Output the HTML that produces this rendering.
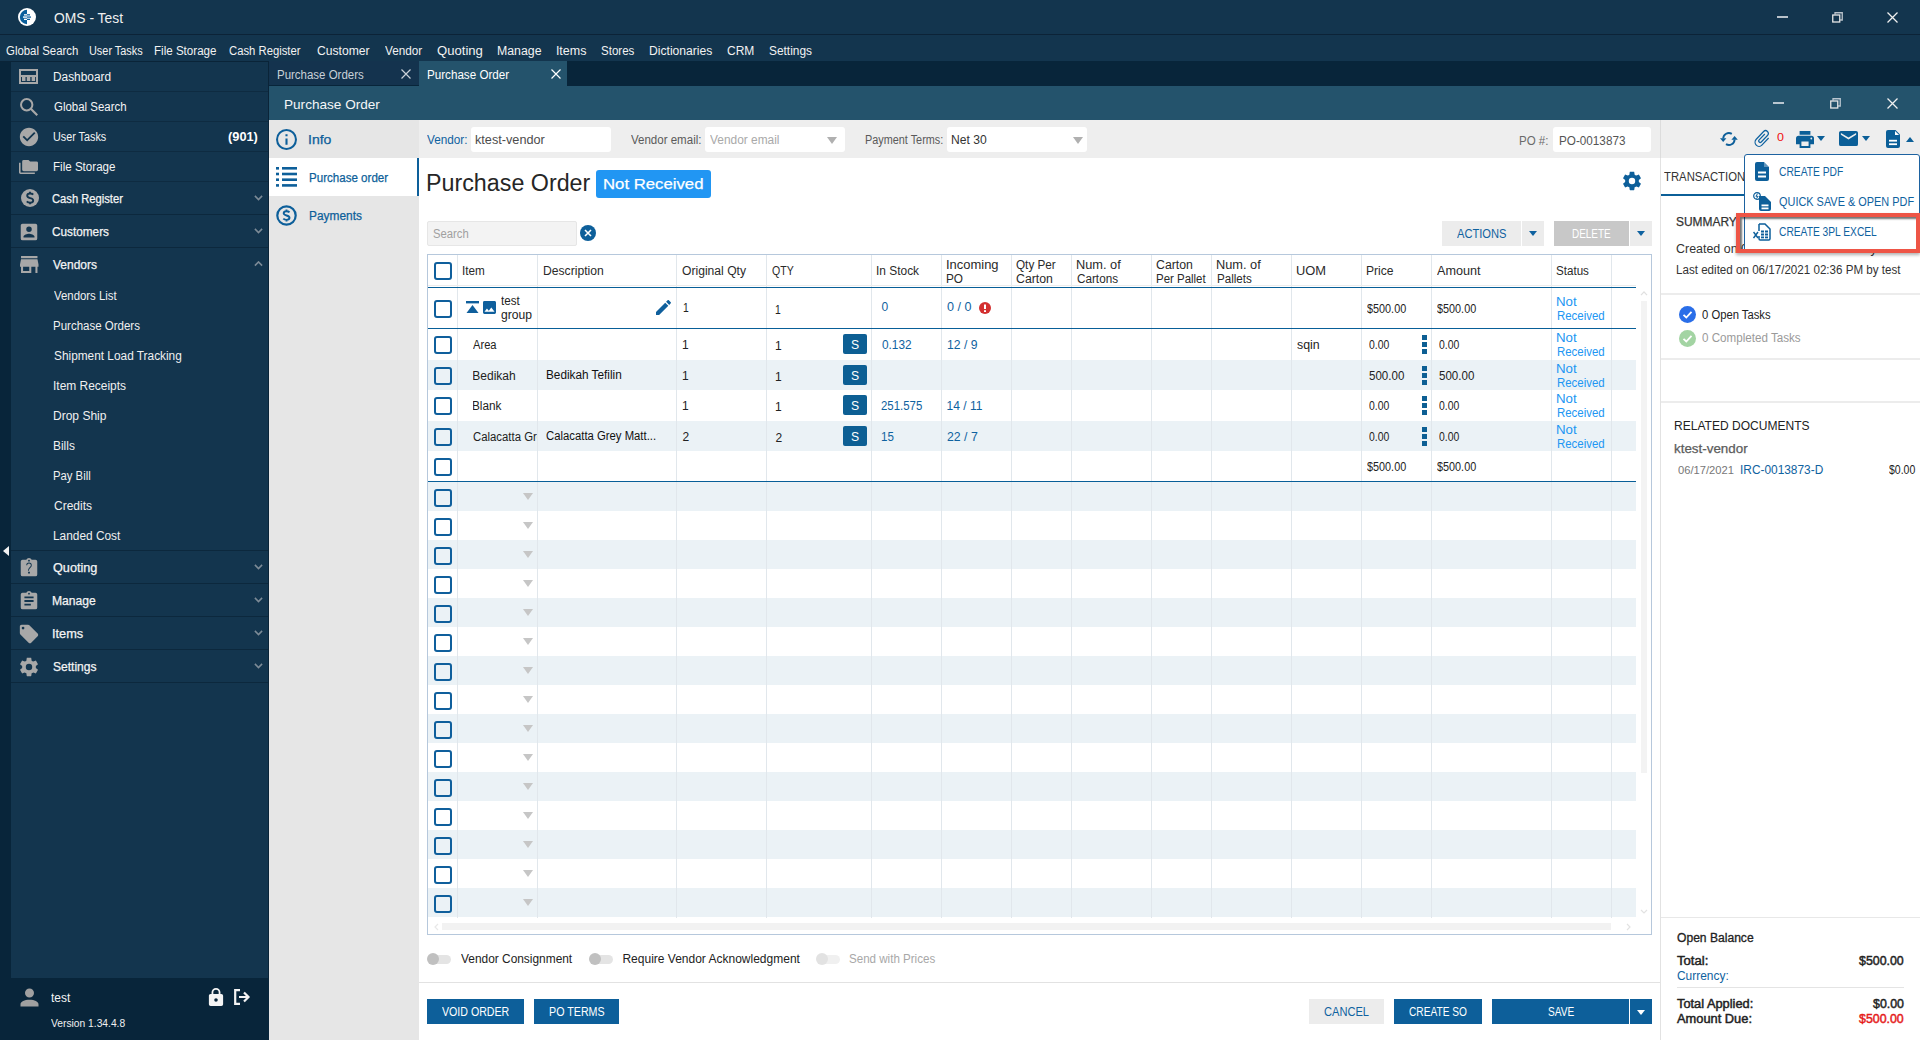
<!DOCTYPE html>
<html><head><meta charset="utf-8"><style>
html,body{margin:0;padding:0;width:1920px;height:1040px;overflow:hidden;background:#fff;}
body{position:relative;font-family:"Liberation Sans",sans-serif;}
div{position:absolute;}
</style></head><body>
<div style="left:0px;top:0px;width:1920px;height:34px;background:#13354e;"></div>
<div style="left:0px;top:34px;width:1920px;height:1px;background:#0c2337;"></div>
<div style="left:0px;top:35px;width:1920px;height:26px;background:#13354e;"></div>
<svg style="position:absolute;left:18px;top:8px;" width="18" height="18" viewBox="0 0 18 18" preserveAspectRatio="none"><circle cx="9" cy="9" r="9" fill="#fff"/><path d="M9 1.8A7.2 7.2 0 0 0 9 16.2Z" fill="#0b5f9b"/><rect x="6" y="6.2" width="3" height="1.3" fill="#fff"/><rect x="9" y="6.2" width="3" height="1.3" fill="#0b5f9b"/><rect x="5" y="8.3" width="4" height="1.6" fill="#d8e6f0"/><rect x="9" y="8.3" width="4" height="1.6" fill="#3d80b3"/><rect x="6" y="10.7" width="3" height="1.3" fill="#fff"/><rect x="9" y="10.7" width="3" height="1.3" fill="#0b5f9b"/></svg>
<div style="left:53.78px;top:10.10px;font-size:14px;line-height:16px;color:#f0f0f0;font-weight:normal;white-space:nowrap;transform:scaleX(0.9896);transform-origin:0 0;">OMS - Test</div>
<div style="left:1777px;top:16px;width:11px;height:2px;background:#b9c2ca;"></div>
<svg style="position:absolute;left:1832px;top:12px;" width="11" height="11" viewBox="0 0 11 11" preserveAspectRatio="none"><rect x="0.75" y="3" width="7" height="7" fill="none" stroke="#e6e6e6" stroke-width="1.3"/><path d="M3 3V0.75H10.25V8H8" fill="none" stroke="#b9c2ca" stroke-width="1.3"/></svg>
<svg style="position:absolute;left:1887px;top:12px;" width="11" height="11" viewBox="0 0 11 11" preserveAspectRatio="none"><path d="M0.5 0.5L10.5 10.5M10.5 0.5L0.5 10.5" stroke="#f0f0f0" stroke-width="1.3"/></svg>
<div style="left:5.93px;top:44.00px;font-size:12.5px;line-height:14px;color:#f2f2f2;font-weight:normal;white-space:nowrap;transform:scaleX(0.9132);transform-origin:0 0;">Global Search</div>
<div style="left:89.43px;top:44.00px;font-size:12.5px;line-height:14px;color:#f2f2f2;font-weight:normal;white-space:nowrap;transform:scaleX(0.8723);transform-origin:0 0;">User Tasks</div>
<div style="left:154.07px;top:44.00px;font-size:12.5px;line-height:14px;color:#f2f2f2;font-weight:normal;white-space:nowrap;transform:scaleX(0.9269);transform-origin:0 0;">File Storage</div>
<div style="left:229.44px;top:44.00px;font-size:12.5px;line-height:14px;color:#f2f2f2;font-weight:normal;white-space:nowrap;transform:scaleX(0.9027);transform-origin:0 0;">Cash Register</div>
<div style="left:316.59px;top:44.00px;font-size:12.5px;line-height:14px;color:#f2f2f2;font-weight:normal;white-space:nowrap;transform:scaleX(0.9716);transform-origin:0 0;">Customer</div>
<div style="left:384.94px;top:44.00px;font-size:12.5px;line-height:14px;color:#f2f2f2;font-weight:normal;white-space:nowrap;transform:scaleX(0.9386);transform-origin:0 0;">Vendor</div>
<div style="left:436.91px;top:44.00px;font-size:12.5px;line-height:14px;color:#f2f2f2;font-weight:normal;white-space:nowrap;transform:scaleX(1.0478);transform-origin:0 0;">Quoting</div>
<div style="left:497.01px;top:44.00px;font-size:12.5px;line-height:14px;color:#f2f2f2;font-weight:normal;white-space:nowrap;transform:scaleX(0.9857);transform-origin:0 0;">Manage</div>
<div style="left:555.88px;top:44.00px;font-size:12.5px;line-height:14px;color:#f2f2f2;font-weight:normal;white-space:nowrap;">Items</div>
<div style="left:601.08px;top:44.00px;font-size:12.5px;line-height:14px;color:#f2f2f2;font-weight:normal;white-space:nowrap;transform:scaleX(0.9224);transform-origin:0 0;">Stores</div>
<div style="left:649.03px;top:44.00px;font-size:12.5px;line-height:14px;color:#f2f2f2;font-weight:normal;white-space:nowrap;transform:scaleX(0.9706);transform-origin:0 0;">Dictionaries</div>
<div style="left:727.40px;top:44.00px;font-size:12.5px;line-height:14px;color:#f2f2f2;font-weight:normal;white-space:nowrap;transform:scaleX(0.9604);transform-origin:0 0;">CRM</div>
<div style="left:769.47px;top:44.00px;font-size:12.5px;line-height:14px;color:#f2f2f2;font-weight:normal;white-space:nowrap;transform:scaleX(0.9505);transform-origin:0 0;">Settings</div>
<div style="left:0px;top:61px;width:11px;height:979px;background:#08253a;"></div>
<div style="left:11px;top:62px;width:258px;height:916px;background:#13354e;"></div>
<div style="left:0px;top:61px;width:269px;height:1px;background:#0a2438;"></div>
<div style="left:0px;top:978px;width:269px;height:62px;background:#08253a;"></div>
<svg style="position:absolute;left:3px;top:546px;" width="6" height="10" viewBox="0 0 6 10" preserveAspectRatio="none"><path d="M6 0V10L0 5Z" fill="#f2f2f2"/></svg>
<div style="left:11px;top:91px;width:257px;height:1px;background:#0e2b41;"></div>
<div style="left:53.35px;top:69.50px;font-size:12.5px;line-height:14px;color:#f4f4f4;font-weight:normal;white-space:nowrap;transform:scaleX(0.9492);transform-origin:0 0;">Dashboard</div>
<svg style="position:absolute;left:19px;top:69px;" width="19" height="15" viewBox="0 0 19 15" preserveAspectRatio="none"><rect x="1" y="1" width="17" height="13" fill="none" stroke="#a8a8a8" stroke-width="2"/><rect x="3" y="8" width="3.5" height="4" fill="#a8a8a8"/><rect x="7.8" y="8" width="3.5" height="4" fill="#a8a8a8"/><rect x="12.6" y="8" width="3.5" height="4" fill="#a8a8a8"/><rect x="1" y="6" width="17" height="2" fill="#a8a8a8"/></svg>
<div style="left:11px;top:121px;width:257px;height:1px;background:#0e2b41;"></div>
<div style="left:53.73px;top:99.50px;font-size:12.5px;line-height:14px;color:#f4f4f4;font-weight:normal;white-space:nowrap;transform:scaleX(0.9158);transform-origin:0 0;">Global Search</div>
<svg style="position:absolute;left:18px;top:96.0px;" width="22" height="22" viewBox="0 0 24 24" preserveAspectRatio="none"><circle cx="9.5" cy="9.5" r="6.2" fill="none" stroke="#a8a8a8" stroke-width="2.2"/><path d="M14 14L21 21" stroke="#a8a8a8" stroke-width="2.4"/></svg>
<div style="left:11px;top:151px;width:257px;height:1px;background:#0e2b41;"></div>
<div style="left:53.49px;top:129.50px;font-size:12.5px;line-height:14px;color:#f4f4f4;font-weight:normal;white-space:nowrap;transform:scaleX(0.8640);transform-origin:0 0;">User Tasks</div>
<svg style="position:absolute;left:18px;top:126.0px;" width="22" height="22" viewBox="0 0 24 24" preserveAspectRatio="none"><path d="M12 2C6.5 2 2 6.5 2 12S6.5 22 12 22 22 17.5 22 12 17.5 2 12 2M10 17L5 12L6.41 10.59L10 14.17L17.59 6.58L19 8L10 17Z" fill="#a8a8a8"/></svg>
<div style="left:11px;top:181px;width:257px;height:1px;background:#0e2b41;"></div>
<div style="left:53.37px;top:159.50px;font-size:12.5px;line-height:14px;color:#f4f4f4;font-weight:normal;white-space:nowrap;transform:scaleX(0.9269);transform-origin:0 0;">File Storage</div>
<svg style="position:absolute;left:19px;top:159.6px;" width="19" height="14" viewBox="0 2 24 20" preserveAspectRatio="none"><path d="M22,4H14L12,2H6A2,2 0 0,0 4,4V16A2,2 0 0,0 6,18H22A2,2 0 0,0 24,16V6A2,2 0 0,0 22,4M2,6H0V11H0V20A2,2 0 0,0 2,22H20V20H2V6Z" fill="#a8a8a8"/></svg>
<div style="left:11px;top:214px;width:257px;height:1px;background:#0c283d;"></div>
<div style="left:52.44px;top:191.50px;font-size:12.5px;line-height:14px;color:#f4f4f4;font-weight:normal;white-space:nowrap;transform:scaleX(0.8957);transform-origin:0 0;-webkit-text-stroke:0.25px #f4f4f4;">Cash Register</div>
<svg style="position:absolute;left:20.5px;top:189px;" width="18" height="18" viewBox="0 0 18 18" preserveAspectRatio="none"><circle cx="9" cy="9" r="9" fill="#a8a8a8"/><path d="M12.2 5.6C11.6 4.9 10.5 4.5 9.2 4.5C7.5 4.5 6.2 5.4 6.2 6.8C6.2 9.9 12.2 8.4 12.2 11.4C12.2 12.8 10.9 13.6 9.1 13.6C7.7 13.6 6.5 13.1 5.8 12.3M9 2.8V4.5M9 13.6V15.3" fill="none" stroke="#13354e" stroke-width="1.9"/></svg>
<svg style="position:absolute;left:253.5px;top:195.0px;" width="9" height="5.5" viewBox="0 0 10 6" preserveAspectRatio="none"><path d="M1 1L5 5L9 1" fill="none" stroke="#7d8b97" stroke-width="1.7"/></svg>
<div style="left:11px;top:247px;width:257px;height:1px;background:#0c283d;"></div>
<div style="left:52.41px;top:224.50px;font-size:12.5px;line-height:14px;color:#f4f4f4;font-weight:normal;white-space:nowrap;transform:scaleX(0.9432);transform-origin:0 0;-webkit-text-stroke:0.25px #f4f4f4;">Customers</div>
<svg style="position:absolute;left:18px;top:220.5px;" width="22" height="22" viewBox="0 0 24 24" preserveAspectRatio="none"><path d="M6,17C6,15 10,13.9 12,13.9C14,13.9 18,15 18,17V18H6M15,9A3,3 0 0,1 12,12A3,3 0 0,1 9,9A3,3 0 0,1 12,6A3,3 0 0,1 15,9M3,5V19A2,2 0 0,0 5,21H19A2,2 0 0,0 21,19V5A2,2 0 0,0 19,3H5C3.89,3 3,3.9 3,5Z" fill="#a8a8a8"/></svg>
<svg style="position:absolute;left:253.5px;top:228.0px;" width="9" height="5.5" viewBox="0 0 10 6" preserveAspectRatio="none"><path d="M1 1L5 5L9 1" fill="none" stroke="#7d8b97" stroke-width="1.7"/></svg>
<div style="left:52.94px;top:257.50px;font-size:12.5px;line-height:14px;color:#f4f4f4;font-weight:normal;white-space:nowrap;transform:scaleX(0.9587);transform-origin:0 0;-webkit-text-stroke:0.25px #f4f4f4;">Vendors</div>
<svg style="position:absolute;left:20.3px;top:255.5px;" width="18.5" height="17" viewBox="3 4 18 16" preserveAspectRatio="none"><path d="M12,18H6V14H12M21,14V12L20,7H4L3,12V14H4V20H14V14H18V20H20V14M20,4H4V6H20V4Z" fill="#a8a8a8"/></svg>
<svg style="position:absolute;left:253.5px;top:261.0px;" width="9" height="5.5" viewBox="0 0 10 6" preserveAspectRatio="none"><path d="M1 5L5 1L9 5" fill="none" stroke="#7d8b97" stroke-width="1.7"/></svg>
<div style="left:11px;top:583px;width:257px;height:1px;background:#0c283d;"></div>
<div style="left:52.83px;top:560.50px;font-size:12.5px;line-height:14px;color:#f4f4f4;font-weight:normal;white-space:nowrap;transform:scaleX(1.0147);transform-origin:0 0;-webkit-text-stroke:0.25px #f4f4f4;">Quoting</div>
<svg style="position:absolute;left:18px;top:556.5px;" width="22" height="22" viewBox="0 0 24 24" preserveAspectRatio="none"><path d="M19,3H14.82C14.4,1.84 13.3,1 12,1C10.7,1 9.6,1.84 9.18,3H5A2,2 0 0,0 3,5V19A2,2 0 0,0 5,21H19A2,2 0 0,0 21,19V5A2,2 0 0,0 19,3M12,3A1,1 0 0,1 13,4A1,1 0 0,1 12,5A1,1 0 0,1 11,4A1,1 0 0,1 12,3M13,18H11V16H13V18M14.07,11.25L13.17,12.17C12.45,12.89 12,13.5 12,15H11V14.5C11,13.39 11.45,12.39 12.17,11.67L13.41,10.41C13.78,10.05 14,9.55 14,9C14,7.89 13.1,7 12,7A2,2 0 0,0 10,9H9A3,3 0 0,1 12,6A3,3 0 0,1 15,9C15,9.88 14.64,10.67 14.07,11.25Z" fill="#a8a8a8"/></svg>
<svg style="position:absolute;left:253.5px;top:564.0px;" width="9" height="5.5" viewBox="0 0 10 6" preserveAspectRatio="none"><path d="M1 1L5 5L9 1" fill="none" stroke="#7d8b97" stroke-width="1.7"/></svg>
<div style="left:11px;top:616px;width:257px;height:1px;background:#0c283d;"></div>
<div style="left:52.43px;top:593.50px;font-size:12.5px;line-height:14px;color:#f4f4f4;font-weight:normal;white-space:nowrap;transform:scaleX(0.9696);transform-origin:0 0;-webkit-text-stroke:0.25px #f4f4f4;">Manage</div>
<svg style="position:absolute;left:18px;top:589.5px;" width="22" height="22" viewBox="0 0 24 24" preserveAspectRatio="none"><path d="M17,9H7V7H17M17,13H7V11H17M14,17H7V15H14M12,3A1,1 0 0,1 13,4A1,1 0 0,1 12,5A1,1 0 0,1 11,4A1,1 0 0,1 12,3M19,3H14.82C14.4,1.84 13.3,1 12,1C10.7,1 9.6,1.84 9.18,3H5A2,2 0 0,0 3,5V19A2,2 0 0,0 5,21H19A2,2 0 0,0 21,19V5A2,2 0 0,0 19,3Z" fill="#a8a8a8"/></svg>
<svg style="position:absolute;left:253.5px;top:597.0px;" width="9" height="5.5" viewBox="0 0 10 6" preserveAspectRatio="none"><path d="M1 1L5 5L9 1" fill="none" stroke="#7d8b97" stroke-width="1.7"/></svg>
<div style="left:11px;top:649px;width:257px;height:1px;background:#0c283d;"></div>
<div style="left:52.25px;top:626.50px;font-size:12.5px;line-height:14px;color:#f4f4f4;font-weight:normal;white-space:nowrap;transform:scaleX(1.0207);transform-origin:0 0;-webkit-text-stroke:0.25px #f4f4f4;">Items</div>
<svg style="position:absolute;left:18px;top:622.5px;" width="22" height="22" viewBox="0 0 24 24" preserveAspectRatio="none"><path d="M5.5,7A1.5,1.5 0 0,1 4,5.5A1.5,1.5 0 0,1 5.5,4A1.5,1.5 0 0,1 7,5.5A1.5,1.5 0 0,1 5.5,7M21.41,11.58L12.41,2.58C12.05,2.22 11.55,2 11,2H4C2.89,2 2,2.89 2,4V11C2,11.55 2.22,12.05 2.59,12.42L11.58,21.42C11.95,21.78 12.45,22 13,22C13.55,22 14.05,21.78 14.41,21.41L21.41,14.41C21.78,14.05 22,13.55 22,13C22,12.44 21.77,11.94 21.41,11.58Z" fill="#a8a8a8"/></svg>
<svg style="position:absolute;left:253.5px;top:630.0px;" width="9" height="5.5" viewBox="0 0 10 6" preserveAspectRatio="none"><path d="M1 1L5 5L9 1" fill="none" stroke="#7d8b97" stroke-width="1.7"/></svg>
<div style="left:11px;top:682px;width:257px;height:1px;background:#0c283d;"></div>
<div style="left:52.86px;top:659.50px;font-size:12.5px;line-height:14px;color:#f4f4f4;font-weight:normal;white-space:nowrap;transform:scaleX(0.9641);transform-origin:0 0;-webkit-text-stroke:0.25px #f4f4f4;">Settings</div>
<svg style="position:absolute;left:18px;top:655.5px;" width="22" height="22" viewBox="0 0 24 24" preserveAspectRatio="none"><path d="M12,15.5A3.5,3.5 0 0,1 8.5,12A3.5,3.5 0 0,1 12,8.5A3.5,3.5 0 0,1 15.5,12A3.5,3.5 0 0,1 12,15.5M19.43,12.97C19.47,12.65 19.5,12.33 19.5,12C19.5,11.67 19.47,11.34 19.43,11L21.54,9.37C21.73,9.22 21.78,8.95 21.66,8.73L19.66,5.27C19.54,5.05 19.27,4.96 19.05,5.05L16.56,6.05C16.04,5.66 15.5,5.32 14.87,5.07L14.5,2.42C14.46,2.18 14.25,2 14,2H10C9.75,2 9.54,2.180 9.5,2.42L9.13,5.07C8.5,5.32 7.96,5.66 7.44,6.05L4.95,5.05C4.73,4.96 4.46,5.05 4.34,5.27L2.34,8.73C2.21,8.95 2.27,9.22 2.46,9.37L4.57,11C4.53,11.34 4.5,11.67 4.5,12C4.5,12.33 4.53,12.65 4.57,12.97L2.46,14.63C2.27,14.78 2.21,15.05 2.34,15.27L4.34,18.73C4.46,18.95 4.73,19.03 4.95,18.95L7.44,17.94C7.96,18.34 8.5,18.68 9.13,18.93L9.5,21.58C9.54,21.82 9.75,22 10,22H14C14.25,22 14.46,21.82 14.5,21.58L14.87,18.93C15.5,18.67 16.04,18.34 16.56,17.94L19.05,18.95C19.27,19.03 19.54,18.95 19.660,18.73L21.66,15.27C21.78,15.05 21.73,14.78 21.54,14.63L19.43,12.97Z" fill="#a8a8a8"/></svg>
<svg style="position:absolute;left:253.5px;top:663.0px;" width="9" height="5.5" viewBox="0 0 10 6" preserveAspectRatio="none"><path d="M1 1L5 5L9 1" fill="none" stroke="#7d8b97" stroke-width="1.7"/></svg>
<div style="left:11px;top:550px;width:257px;height:1px;background:#0c283d;"></div>
<div style="left:228.11px;top:130.00px;font-size:12.5px;line-height:14px;color:#ffffff;font-weight:bold;white-space:nowrap;transform:scaleX(1.0237);transform-origin:0 0;">(901)</div>
<div style="left:268px;top:61px;width:1px;height:917px;background:#0a2438;"></div>
<div style="left:54.14px;top:289.00px;font-size:12.5px;line-height:14px;color:#f0f0f0;font-weight:normal;white-space:nowrap;transform:scaleX(0.9107);transform-origin:0 0;">Vendors List</div>
<div style="left:53.28px;top:319.00px;font-size:12.5px;line-height:14px;color:#f0f0f0;font-weight:normal;white-space:nowrap;transform:scaleX(0.9198);transform-origin:0 0;">Purchase Orders</div>
<div style="left:53.67px;top:349.00px;font-size:12.5px;line-height:14px;color:#f0f0f0;font-weight:normal;white-space:nowrap;transform:scaleX(0.9480);transform-origin:0 0;">Shipment Load Tracking</div>
<div style="left:53.13px;top:379.00px;font-size:12.5px;line-height:14px;color:#f0f0f0;font-weight:normal;white-space:nowrap;transform:scaleX(0.9549);transform-origin:0 0;">Item Receipts</div>
<div style="left:53.24px;top:409.00px;font-size:12.5px;line-height:14px;color:#f0f0f0;font-weight:normal;white-space:nowrap;transform:scaleX(0.9618);transform-origin:0 0;">Drop Ship</div>
<div style="left:53.25px;top:439.00px;font-size:12.5px;line-height:14px;color:#f0f0f0;font-weight:normal;white-space:nowrap;transform:scaleX(0.9535);transform-origin:0 0;">Bills</div>
<div style="left:53.30px;top:469.00px;font-size:12.5px;line-height:14px;color:#f0f0f0;font-weight:normal;white-space:nowrap;transform:scaleX(0.9042);transform-origin:0 0;">Pay Bill</div>
<div style="left:53.60px;top:499.00px;font-size:12.5px;line-height:14px;color:#f0f0f0;font-weight:normal;white-space:nowrap;transform:scaleX(0.9595);transform-origin:0 0;">Credits</div>
<div style="left:53.25px;top:529.00px;font-size:12.5px;line-height:14px;color:#f0f0f0;font-weight:normal;white-space:nowrap;transform:scaleX(0.9497);transform-origin:0 0;">Landed Cost</div>
<svg style="position:absolute;left:16.3px;top:983.5px;" width="27" height="27" viewBox="0 0 24 24" preserveAspectRatio="none"><path d="M12,4A4,4 0 0,1 16,8A4,4 0 0,1 12,12A4,4 0 0,1 8,8A4,4 0 0,1 12,4M12,14C16.42,14 20,15.79 20,18V20H4V18C4,15.79 7.58,14 12,14Z" fill="#a0a0a0"/></svg>
<div style="left:50.82px;top:991.00px;font-size:12.5px;line-height:14px;color:#f4f4f4;font-weight:normal;white-space:nowrap;transform:scaleX(0.9560);transform-origin:0 0;">test</div>
<div style="left:50.95px;top:1017.20px;font-size:11px;line-height:12px;color:#f0f0f0;font-weight:normal;white-space:nowrap;transform:scaleX(0.9331);transform-origin:0 0;">Version 1.34.4.8</div>
<svg style="position:absolute;left:208px;top:988px;" width="16" height="18" viewBox="3 1 18 21" preserveAspectRatio="none"><path d="M12,17A2,2 0 0,0 14,15C14,13.89 13.1,13 12,13A2,2 0 0,0 10,15A2,2 0 0,0 12,17M18,8A2,2 0 0,1 20,10V20A2,2 0 0,1 18,22H6A2,2 0 0,1 4,20V10C4,8.89 4.9,8 6,8H7V6A5,5 0 0,1 12,1A5,5 0 0,1 17,6V8H18M12,3A3,3 0 0,0 9,6V8H15V6A3,3 0 0,0 12,3Z" fill="#f4f4f4"/></svg>
<svg style="position:absolute;left:234px;top:989px;" width="17" height="16" viewBox="0 0 17 16" preserveAspectRatio="none"><path d="M6 1.2H1.2V14.8H6" fill="none" stroke="#f4f4f4" stroke-width="2.2"/><path d="M5 8H14M10 3.5L14.5 8L10 12.5" fill="none" stroke="#f4f4f4" stroke-width="2.2"/></svg>
<div style="left:269px;top:61px;width:1651px;height:25px;background:#08253a;"></div>
<div style="left:269px;top:61px;width:150px;height:24px;background:#14334e;"></div>
<div style="left:276.68px;top:67.60px;font-size:12px;line-height:14px;color:#c9d1d8;font-weight:normal;white-space:nowrap;transform:scaleX(0.9559);transform-origin:0 0;">Purchase Orders</div>
<svg style="position:absolute;left:401px;top:69px;" width="10" height="10" viewBox="0 0 10 10" preserveAspectRatio="none"><path d="M0.5 0.5L9.5 9.5M9.5 0.5L0.5 9.5" stroke="#c9d1d8" stroke-width="1.2"/></svg>
<div style="left:419px;top:61px;width:148px;height:25px;background:#24536c;"></div>
<div style="left:426.57px;top:67.60px;font-size:12px;line-height:14px;color:#ffffff;font-weight:normal;white-space:nowrap;transform:scaleX(0.9698);transform-origin:0 0;">Purchase Order</div>
<svg style="position:absolute;left:551px;top:69px;" width="10" height="10" viewBox="0 0 10 10" preserveAspectRatio="none"><path d="M0.5 0.5L9.5 9.5M9.5 0.5L0.5 9.5" stroke="#ffffff" stroke-width="1.2"/></svg>
<div style="left:269px;top:86px;width:1651px;height:34px;background:#24536c;"></div>
<div style="left:284.41px;top:96.90px;font-size:13px;line-height:15px;color:#f4f6f8;font-weight:normal;white-space:nowrap;transform:scaleX(1.0444);transform-origin:0 0;">Purchase Order</div>
<div style="left:1773px;top:102px;width:11px;height:2px;background:#b9c6d0;"></div>
<svg style="position:absolute;left:1830px;top:98px;" width="11" height="11" viewBox="0 0 11 11" preserveAspectRatio="none"><rect x="0.75" y="3" width="7" height="7" fill="none" stroke="#e6e6e6" stroke-width="1.3"/><path d="M3 3V0.75H10.25V8H8" fill="none" stroke="#b9c6d0" stroke-width="1.3"/></svg>
<svg style="position:absolute;left:1887px;top:98px;" width="11" height="11" viewBox="0 0 11 11" preserveAspectRatio="none"><path d="M0.5 0.5L10.5 10.5M10.5 0.5L0.5 10.5" stroke="#f0f0f0" stroke-width="1.3"/></svg>
<div style="left:269px;top:120px;width:150px;height:920px;background:#e6e6e6;"></div>
<div style="left:269px;top:158px;width:148px;height:38px;background:#ffffff;"></div>
<div style="left:417px;top:158px;width:2px;height:38px;background:#0d5f9a;"></div>
<svg style="position:absolute;left:276px;top:129px;" width="21" height="21" viewBox="2 2 20 20" preserveAspectRatio="none"><path d="M11,9H13V7H11M12,20C7.59,20 4,16.41 4,12C4,7.59 7.59,4 12,4C16.41,4 20,7.59 20,12C20,16.41 16.41,20 12,20M12,2A10,10 0 0,0 2,12A10,10 0 0,0 12,22A10,10 0 0,0 22,12A10,10 0 0,0 12,2M11,17H13V11H11V17Z" fill="#0d5f9a"/></svg>
<div style="left:308.44px;top:132.80px;font-size:12.5px;line-height:14px;color:#0d5f9a;font-weight:normal;white-space:nowrap;transform:scaleX(1.1205);transform-origin:0 0;-webkit-text-stroke:0.25px #0d5f9a;">Info</div>
<svg style="position:absolute;left:276px;top:167px;" width="21" height="20" viewBox="0 0 21 20" preserveAspectRatio="none"><rect x="0" y="0" width="3" height="2.6" fill="#0d5f9a"/><rect x="6" y="0" width="15" height="2.6" fill="#0d5f9a"/><rect x="0" y="5.7" width="3" height="2.6" fill="#0d5f9a"/><rect x="6" y="5.7" width="15" height="2.6" fill="#0d5f9a"/><rect x="0" y="11.4" width="3" height="2.6" fill="#0d5f9a"/><rect x="6" y="11.4" width="15" height="2.6" fill="#0d5f9a"/><rect x="0" y="17.1" width="3" height="2.6" fill="#0d5f9a"/><rect x="6" y="17.1" width="15" height="2.6" fill="#0d5f9a"/></svg>
<div style="left:308.77px;top:170.50px;font-size:12.5px;line-height:14px;color:#0d5f9a;font-weight:normal;white-space:nowrap;transform:scaleX(0.9258);transform-origin:0 0;-webkit-text-stroke:0.25px #0d5f9a;">Purchase order</div>
<svg style="position:absolute;left:276px;top:205px;" width="21" height="21" viewBox="0 0 21 21" preserveAspectRatio="none"><circle cx="10.5" cy="10.5" r="9.2" fill="none" stroke="#0d5f9a" stroke-width="2.2"/><path d="M13.5 7.3C12.8 6.5 11.8 6.2 10.5 6.2C8.9 6.2 7.7 7 7.7 8.3C7.7 11.2 13.5 9.8 13.5 12.8C13.5 14.1 12.3 14.9 10.5 14.9C9.2 14.9 8.1 14.5 7.3 13.7M10.5 4.5V6.2M10.5 14.9V16.6" fill="none" stroke="#0d5f9a" stroke-width="1.9"/></svg>
<div style="left:308.75px;top:208.50px;font-size:12.5px;line-height:14px;color:#0d5f9a;font-weight:normal;white-space:nowrap;transform:scaleX(0.9515);transform-origin:0 0;-webkit-text-stroke:0.25px #0d5f9a;">Payments</div>
<div style="left:419px;top:120px;width:1501px;height:38px;background:#eeeeee;"></div>
<div style="left:1660px;top:120px;width:1px;height:38px;background:#dcdcdc;"></div>
<div style="left:426.94px;top:132.80px;font-size:12px;line-height:14px;color:#0f62a0;font-weight:normal;white-space:nowrap;transform:scaleX(0.9801);transform-origin:0 0;">Vendor:</div>
<div style="left:471px;top:127px;width:140px;height:25px;background:#ffffff;border-radius:3px;"></div>
<div style="left:474.68px;top:132.80px;font-size:12px;line-height:14px;color:#4c4c4c;font-weight:normal;white-space:nowrap;transform:scaleX(1.0563);transform-origin:0 0;">ktest-vendor</div>
<div style="left:631.19px;top:132.80px;font-size:12px;line-height:14px;color:#5a5a5a;font-weight:normal;white-space:nowrap;transform:scaleX(0.9601);transform-origin:0 0;">Vendor email:</div>
<div style="left:705px;top:127px;width:140px;height:25px;background:#ffffff;border-radius:3px;"></div>
<div style="left:710.34px;top:132.80px;font-size:12px;line-height:14px;color:#a9a9a9;font-weight:normal;white-space:nowrap;transform:scaleX(0.9916);transform-origin:0 0;">Vendor email</div>
<svg style="position:absolute;left:827px;top:137px;" width="10" height="7" viewBox="0 0 10 7" preserveAspectRatio="none"><path d="M0 0H10L5 7Z" fill="#b0b0b0"/></svg>
<div style="left:864.73px;top:132.80px;font-size:12px;line-height:14px;color:#5a5a5a;font-weight:normal;white-space:nowrap;transform:scaleX(0.9050);transform-origin:0 0;">Payment Terms:</div>
<div style="left:947px;top:127px;width:140px;height:25px;background:#ffffff;border-radius:3px;"></div>
<div style="left:950.73px;top:132.80px;font-size:12px;line-height:14px;color:#333333;font-weight:normal;white-space:nowrap;transform:scaleX(1.0100);transform-origin:0 0;">Net 30</div>
<svg style="position:absolute;left:1073px;top:137px;" width="10" height="7" viewBox="0 0 10 7" preserveAspectRatio="none"><path d="M0 0H10L5 7Z" fill="#b0b0b0"/></svg>
<div style="left:1519.08px;top:133.50px;font-size:12px;line-height:14px;color:#6a6a6a;font-weight:normal;white-space:nowrap;transform:scaleX(0.9609);transform-origin:0 0;">PO #:</div>
<div style="left:1553px;top:127px;width:98px;height:25px;background:#ffffff;border-radius:3px;"></div>
<div style="left:1559.06px;top:133.50px;font-size:12px;line-height:14px;color:#555555;font-weight:normal;white-space:nowrap;transform:scaleX(0.9760);transform-origin:0 0;">PO-0013873</div>
<svg style="position:absolute;left:1720px;top:132px;" width="18" height="14" viewBox="0 0 18 14" preserveAspectRatio="none"><path d="M11.8 1.9A5.6 5.6 0 0 0 3.2 6.6" fill="none" stroke="#0d5f9a" stroke-width="1.9"/><path d="M0 6.3H6.4L3.2 10Z" fill="#0d5f9a"/><path d="M6 12.1A5.6 5.6 0 0 0 14.6 7.4" fill="none" stroke="#0d5f9a" stroke-width="1.9"/><path d="M11.4 7.7H17.8L14.6 4Z" fill="#0d5f9a"/></svg>
<svg style="position:absolute;left:1752px;top:128px;" width="20" height="21" viewBox="0 0 24 24" preserveAspectRatio="none"><g transform="rotate(45 12 12)"><path d="M16.5,6V17.5A4,4 0 0,1 12.5,21.5A4,4 0 0,1 8.5,17.5V5A2.5,2.5 0 0,1 11,2.5A2.5,2.5 0 0,1 13.5,5V15.5A1,1 0 0,1 12.5,16.5A1,1 0 0,1 11.5,15.5V6H10V15.5A2.5,2.5 0 0,0 12.5,18A2.5,2.5 0 0,0 15,15.5V5A4,4 0 0,0 11,1A4,4 0 0,0 7,5V17.5A5.5,5.5 0 0,0 12.5,23A5.5,5.5 0 0,0 18,17.5V6H16.5Z" fill="#0f62a0"/></g></svg>
<div style="left:1776.50px;top:131.00px;font-size:11px;line-height:12px;color:#f01010;font-weight:normal;white-space:nowrap;transform:scaleX(1.1364);transform-origin:0 0;">0</div>
<svg style="position:absolute;left:1796px;top:130.5px;" width="18" height="17" viewBox="2 3 20 18" preserveAspectRatio="none"><path d="M18,3H6V7H18M19,12A1,1 0 0,1 18,11A1,1 0 0,1 19,10A1,1 0 0,1 20,11A1,1 0 0,1 19,12M16,19H8V14H16M19,8H5A3,3 0 0,0 2,11V17H6V21H18V17H22V11A3,3 0 0,0 19,8Z" fill="#0b5f98"/></svg>
<svg style="position:absolute;left:1817px;top:136px;" width="8" height="5" viewBox="0 0 8 5" preserveAspectRatio="none"><path d="M0 0H8L4 5Z" fill="#0b5f98"/></svg>
<svg style="position:absolute;left:1839px;top:131px;" width="19" height="15" viewBox="2 4 20 16" preserveAspectRatio="none"><path d="M20,8L12,13L4,8V6L12,11L20,6M20,4H4C2.89,4 2,4.89 2,6V18A2,2 0 0,0 4,20H20A2,2 0 0,0 22,18V6C22,4.89 21.1,4 20,4Z" fill="#0b5f98"/></svg>
<svg style="position:absolute;left:1862px;top:136px;" width="8" height="5" viewBox="0 0 8 5" preserveAspectRatio="none"><path d="M0 0H8L4 5Z" fill="#0b5f98"/></svg>
<svg style="position:absolute;left:1886px;top:130px;" width="14" height="18" viewBox="0 0 14 18" preserveAspectRatio="none"><path d="M2 0H9.5L14 4.5V16A2 2 0 0 1 12 18H2A2 2 0 0 1 0 16V2A2 2 0 0 1 2 0Z" fill="#0b5f98"/><path d="M9 0.9V5H13.1Z" fill="#fff"/><rect x="3" y="9.8" width="8" height="1.8" fill="#fff"/><rect x="3" y="13.3" width="8" height="1.8" fill="#fff"/></svg>
<svg style="position:absolute;left:1906px;top:137px;" width="8" height="5" viewBox="0 0 8 5" preserveAspectRatio="none"><path d="M0 5H8L4 0Z" fill="#0b5f98"/></svg>
<div style="left:419px;top:158px;width:1241px;height:824px;background:#ffffff;"></div>
<div style="left:419px;top:982px;width:1241px;height:1px;background:#e2e2e2;"></div>
<div style="left:419px;top:983px;width:1241px;height:57px;background:#ffffff;"></div>
<div style="left:425.94px;top:170.40px;font-size:23px;line-height:26px;color:#262626;font-weight:normal;white-space:nowrap;transform:scaleX(1.0120);transform-origin:0 0;">Purchase Order</div>
<div style="left:596px;top:170px;width:115px;height:28px;background:#2196f3;border-radius:3px;"></div>
<div style="left:603.06px;top:174.60px;font-size:15px;line-height:17px;color:#ffffff;font-weight:normal;white-space:nowrap;transform:scaleX(1.1159);transform-origin:0 0;-webkit-text-stroke:0.25px #ffffff;">Not Received</div>
<svg style="position:absolute;left:1621px;top:170px;" width="22" height="22" viewBox="0 0 24 24" preserveAspectRatio="none"><path d="M12,15.5A3.5,3.5 0 0,1 8.5,12A3.5,3.5 0 0,1 12,8.5A3.5,3.5 0 0,1 15.5,12A3.5,3.5 0 0,1 12,15.5M19.43,12.97C19.47,12.65 19.5,12.33 19.5,12C19.5,11.67 19.47,11.34 19.43,11L21.54,9.37C21.73,9.22 21.78,8.95 21.66,8.73L19.66,5.27C19.54,5.05 19.27,4.96 19.05,5.05L16.56,6.05C16.04,5.66 15.5,5.32 14.87,5.07L14.5,2.42C14.46,2.18 14.25,2 14,2H10C9.75,2 9.54,2.180 9.5,2.42L9.13,5.07C8.5,5.32 7.96,5.66 7.44,6.05L4.95,5.05C4.73,4.96 4.46,5.05 4.34,5.27L2.34,8.73C2.21,8.95 2.27,9.22 2.46,9.37L4.57,11C4.53,11.34 4.5,11.67 4.5,12C4.5,12.33 4.53,12.65 4.57,12.97L2.46,14.63C2.27,14.78 2.21,15.05 2.34,15.27L4.34,18.73C4.46,18.95 4.73,19.03 4.95,18.95L7.44,17.94C7.96,18.34 8.5,18.68 9.13,18.93L9.5,21.58C9.54,21.82 9.75,22 10,22H14C14.25,22 14.46,21.82 14.5,21.58L14.87,18.93C15.5,18.67 16.04,18.34 16.56,17.94L19.05,18.95C19.27,19.03 19.54,18.95 19.660,18.73L21.66,15.27C21.78,15.05 21.73,14.78 21.54,14.63L19.43,12.97Z" fill="#0d5f9a"/></svg>
<div style="left:427px;top:221px;width:150px;height:25px;background:#f3f3f3;border:1px solid #e6e6e6;box-sizing:border-box;border-radius:2px;"></div>
<div style="left:432.79px;top:227.00px;font-size:12px;line-height:14px;color:#a0a0a0;font-weight:normal;white-space:nowrap;transform:scaleX(0.9384);transform-origin:0 0;">Search</div>
<svg style="position:absolute;left:580px;top:225px;" width="16" height="16" viewBox="0 0 16 16" preserveAspectRatio="none"><circle cx="8" cy="8" r="8" fill="#0d5f9a"/><path d="M5 5L11 11M11 5L5 11" stroke="#fff" stroke-width="1.6"/></svg>
<div style="left:1442px;top:221px;width:79px;height:25px;background:#ececec;"></div>
<div style="left:1457.00px;top:227.00px;font-size:12px;line-height:14px;color:#0f62a0;font-weight:normal;white-space:nowrap;transform:scaleX(0.9280);transform-origin:0 0;">ACTIONS</div>
<div style="left:1522px;top:221px;width:22px;height:25px;background:#ececec;"></div>
<svg style="position:absolute;left:1529px;top:231px;" width="8" height="5" viewBox="0 0 8 5" preserveAspectRatio="none"><path d="M0 0H8L4 5Z" fill="#0f62a0"/></svg>
<div style="left:1554px;top:221px;width:75px;height:25px;background:#c8c8c8;"></div>
<div style="left:1572.20px;top:227.00px;font-size:12px;line-height:14px;color:#ffffff;font-weight:normal;white-space:nowrap;transform:scaleX(0.8289);transform-origin:0 0;">DELETE</div>
<div style="left:1630px;top:221px;width:22px;height:25px;background:#ececec;"></div>
<svg style="position:absolute;left:1637px;top:231px;" width="8" height="5" viewBox="0 0 8 5" preserveAspectRatio="none"><path d="M0 0H8L4 5Z" fill="#0f62a0"/></svg>
<div style="left:427px;top:254px;width:1225px;height:681px;background:#ffffff;border:1px solid #b6c8dc;box-sizing:border-box;"></div>
<div style="left:428px;top:360px;width:1208px;height:30px;background:#ebf2f6;"></div>
<div style="left:428px;top:421px;width:1208px;height:30px;background:#ebf2f6;"></div>
<div style="left:428px;top:482px;width:1208px;height:29px;background:#ebf2f6;"></div>
<div style="left:428px;top:540px;width:1208px;height:29px;background:#ebf2f6;"></div>
<div style="left:428px;top:598px;width:1208px;height:29px;background:#ebf2f6;"></div>
<div style="left:428px;top:656px;width:1208px;height:29px;background:#ebf2f6;"></div>
<div style="left:428px;top:714px;width:1208px;height:29px;background:#ebf2f6;"></div>
<div style="left:428px;top:772px;width:1208px;height:29px;background:#ebf2f6;"></div>
<div style="left:428px;top:830px;width:1208px;height:29px;background:#ebf2f6;"></div>
<div style="left:428px;top:888px;width:1208px;height:29px;background:#ebf2f6;"></div>
<div style="left:457px;top:255px;width:1px;height:663px;background:#e1e7ec;"></div>
<div style="left:537px;top:255px;width:1px;height:663px;background:#e1e7ec;"></div>
<div style="left:676px;top:255px;width:1px;height:663px;background:#e1e7ec;"></div>
<div style="left:766px;top:255px;width:1px;height:663px;background:#e1e7ec;"></div>
<div style="left:871px;top:255px;width:1px;height:663px;background:#e1e7ec;"></div>
<div style="left:941px;top:255px;width:1px;height:663px;background:#e1e7ec;"></div>
<div style="left:1011px;top:255px;width:1px;height:663px;background:#e1e7ec;"></div>
<div style="left:1071px;top:255px;width:1px;height:663px;background:#e1e7ec;"></div>
<div style="left:1151px;top:255px;width:1px;height:663px;background:#e1e7ec;"></div>
<div style="left:1211px;top:255px;width:1px;height:663px;background:#e1e7ec;"></div>
<div style="left:1291px;top:255px;width:1px;height:663px;background:#e1e7ec;"></div>
<div style="left:1361px;top:255px;width:1px;height:663px;background:#e1e7ec;"></div>
<div style="left:1431px;top:255px;width:1px;height:663px;background:#e1e7ec;"></div>
<div style="left:1551px;top:255px;width:1px;height:663px;background:#e1e7ec;"></div>
<div style="left:1611px;top:255px;width:1px;height:663px;background:#e1e7ec;"></div>
<div style="left:428px;top:285px;width:1208px;height:1px;background:#ececec;"></div>
<div style="left:428px;top:287px;width:1208px;height:1px;background:#085f98;"></div>
<div style="left:428px;top:328px;width:1208px;height:1px;background:#085f98;"></div>
<div style="left:428px;top:481px;width:1208px;height:1px;background:#085f98;"></div>
<div style="left:434px;top:262px;width:18px;height:18px;background:transparent;border:2px solid #0f5f9c;border-radius:3px;box-sizing:border-box;"></div>
<div style="left:462.34px;top:264.00px;font-size:12px;line-height:14px;color:#2a2a2a;font-weight:normal;white-space:nowrap;transform:scaleX(0.9777);transform-origin:0 0;">Item</div>
<div style="left:542.53px;top:264.00px;font-size:12px;line-height:14px;color:#2a2a2a;font-weight:normal;white-space:nowrap;transform:scaleX(1.0127);transform-origin:0 0;">Description</div>
<div style="left:682.05px;top:264.00px;font-size:12px;line-height:14px;color:#2a2a2a;font-weight:normal;white-space:nowrap;transform:scaleX(1.0108);transform-origin:0 0;">Original Qty</div>
<div style="left:771.53px;top:264.00px;font-size:12px;line-height:14px;color:#2a2a2a;font-weight:normal;white-space:nowrap;transform:scaleX(0.8794);transform-origin:0 0;">QTY</div>
<div style="left:875.93px;top:264.00px;font-size:12px;line-height:14px;color:#2a2a2a;font-weight:normal;white-space:nowrap;transform:scaleX(0.9929);transform-origin:0 0;">In Stock</div>
<div style="left:945.83px;top:257.75px;font-size:12px;line-height:14px;color:#2a2a2a;font-weight:normal;white-space:nowrap;transform:scaleX(1.0791);transform-origin:0 0;">Incoming</div>
<div style="left:946.06px;top:272.00px;font-size:12px;line-height:14px;color:#2a2a2a;font-weight:normal;white-space:nowrap;transform:scaleX(0.9823);transform-origin:0 0;">PO</div>
<div style="left:1016.47px;top:257.75px;font-size:12px;line-height:14px;color:#2a2a2a;font-weight:normal;white-space:nowrap;transform:scaleX(0.9774);transform-origin:0 0;">Qty Per</div>
<div style="left:1016.38px;top:272.00px;font-size:12px;line-height:14px;color:#2a2a2a;font-weight:normal;white-space:nowrap;transform:scaleX(1.0254);transform-origin:0 0;">Carton</div>
<div style="left:1076.48px;top:257.75px;font-size:12px;line-height:14px;color:#2a2a2a;font-weight:normal;white-space:nowrap;transform:scaleX(1.0657);transform-origin:0 0;">Num. of</div>
<div style="left:1076.91px;top:272.00px;font-size:12px;line-height:14px;color:#2a2a2a;font-weight:normal;white-space:nowrap;transform:scaleX(0.9761);transform-origin:0 0;">Cartons</div>
<div style="left:1156.38px;top:257.75px;font-size:12px;line-height:14px;color:#2a2a2a;font-weight:normal;white-space:nowrap;transform:scaleX(1.0254);transform-origin:0 0;">Carton</div>
<div style="left:1156.08px;top:272.00px;font-size:12px;line-height:14px;color:#2a2a2a;font-weight:normal;white-space:nowrap;transform:scaleX(0.9549);transform-origin:0 0;">Per Pallet</div>
<div style="left:1216.48px;top:257.75px;font-size:12px;line-height:14px;color:#2a2a2a;font-weight:normal;white-space:nowrap;transform:scaleX(1.0657);transform-origin:0 0;">Num. of</div>
<div style="left:1216.57px;top:272.00px;font-size:12px;line-height:14px;color:#2a2a2a;font-weight:normal;white-space:nowrap;transform:scaleX(0.9676);transform-origin:0 0;">Pallets</div>
<div style="left:1296.03px;top:264.00px;font-size:12px;line-height:14px;color:#2a2a2a;font-weight:normal;white-space:nowrap;transform:scaleX(1.0728);transform-origin:0 0;">UOM</div>
<div style="left:1366.03px;top:264.00px;font-size:12px;line-height:14px;color:#2a2a2a;font-weight:normal;white-space:nowrap;transform:scaleX(1.0078);transform-origin:0 0;">Price</div>
<div style="left:1437.00px;top:264.00px;font-size:12px;line-height:14px;color:#2a2a2a;font-weight:normal;white-space:nowrap;transform:scaleX(1.0538);transform-origin:0 0;">Amount</div>
<div style="left:1556.48px;top:264.00px;font-size:12px;line-height:14px;color:#2a2a2a;font-weight:normal;white-space:nowrap;transform:scaleX(0.9679);transform-origin:0 0;">Status</div>
<div style="left:434px;top:300px;width:18px;height:18px;background:transparent;border:2px solid #0f5f9c;border-radius:3px;box-sizing:border-box;"></div>
<svg style="position:absolute;left:466px;top:301px;" width="13" height="13" viewBox="0 0 13 13" preserveAspectRatio="none"><rect x="0" y="0" width="13" height="2.4" fill="#0f5f9c"/><path d="M6.5 4L12.5 12H0.5Z" fill="#0f5f9c"/></svg>
<svg style="position:absolute;left:483px;top:301px;" width="13" height="13" viewBox="3 3 18 18" preserveAspectRatio="none"><path d="M8.5,13.5L11,16.5L14.5,12L19,18H5M21,19V5C21,3.89 20.1,3 19,3H5A2,2 0 0,0 3,5V19A2,2 0 0,0 5,21H19A2,2 0 0,0 21,19Z" fill="#0f5f9c"/></svg>
<div style="left:501.13px;top:293.70px;font-size:12px;line-height:14px;color:#222;font-weight:normal;white-space:nowrap;transform:scaleX(0.9696);transform-origin:0 0;">test</div>
<div style="left:500.82px;top:308.00px;font-size:12px;line-height:14px;color:#222;font-weight:normal;white-space:nowrap;transform:scaleX(1.0101);transform-origin:0 0;">group</div>
<svg style="position:absolute;left:656px;top:300px;" width="15" height="15" viewBox="3 3 18 18" preserveAspectRatio="none"><path d="M20.71,7.04C21.1,6.65 21.1,6 20.71,5.63L18.37,3.29C18,2.9 17.35,2.9 16.96,3.29L15.12,5.12L18.87,8.87M3,17.25V21H6.75L17.81,9.93L14.06,6.18L3,17.25Z" fill="#0f5f9c"/></svg>
<div style="left:682.72px;top:300.70px;font-size:12px;line-height:14px;color:#222;font-weight:normal;white-space:nowrap;transform:scaleX(0.8621);transform-origin:0 0;">1</div>
<div style="left:775.22px;top:303.00px;font-size:12px;line-height:14px;color:#222;font-weight:normal;white-space:nowrap;transform:scaleX(0.8621);transform-origin:0 0;">1</div>
<div style="left:881.52px;top:300.25px;font-size:12px;line-height:14px;color:#0f62a0;font-weight:normal;white-space:nowrap;">0</div>
<div style="left:946.50px;top:300.25px;font-size:12px;line-height:14px;color:#0f62a0;font-weight:normal;white-space:nowrap;transform:scaleX(1.0472);transform-origin:0 0;">0 / 0</div>
<svg style="position:absolute;left:979px;top:302px;" width="12" height="12" viewBox="0 0 12 12" preserveAspectRatio="none"><circle cx="6" cy="6" r="6" fill="#d32f2f"/><rect x="5" y="2.5" width="2" height="4.5" fill="#fff"/><rect x="5" y="8.2" width="2" height="1.8" fill="#fff"/></svg>
<div style="left:1367.39px;top:301.50px;font-size:12px;line-height:14px;color:#222;font-weight:normal;white-space:nowrap;transform:scaleX(0.9034);transform-origin:0 0;">$500.00</div>
<div style="left:1437.39px;top:301.50px;font-size:12px;line-height:14px;color:#222;font-weight:normal;white-space:nowrap;transform:scaleX(0.9034);transform-origin:0 0;">$500.00</div>
<div style="left:1556.44px;top:294.50px;font-size:12px;line-height:14px;color:#2196f3;font-weight:normal;white-space:nowrap;transform:scaleX(1.1054);transform-origin:0 0;">Not</div>
<div style="left:1556.59px;top:309.00px;font-size:12px;line-height:14px;color:#2196f3;font-weight:normal;white-space:nowrap;transform:scaleX(0.9524);transform-origin:0 0;">Received</div>
<div style="left:434px;top:336px;width:18px;height:18px;background:transparent;border:2px solid #0f5f9c;border-radius:3px;box-sizing:border-box;"></div>
<div style="left:473px;top:334px;width:64px;height:20px;overflow:hidden">
<div style="left:0.25px;top:3.75px;font-size:12px;line-height:14px;color:#222;font-weight:normal;white-space:nowrap;transform:scaleX(0.9281);transform-origin:0 0;">Area</div>
</div>
<div style="left:682.10px;top:337.80px;font-size:12px;line-height:14px;color:#222;font-weight:normal;white-space:nowrap;">1</div>
<div style="left:775.10px;top:338.50px;font-size:12px;line-height:14px;color:#222;font-weight:normal;white-space:nowrap;">1</div>
<div style="left:843px;top:334px;width:24px;height:20px;background:#0d5f94;border-radius:2px;"></div>
<div style="left:850.95px;top:338.00px;font-size:12px;line-height:14px;color:#fff;font-weight:normal;white-space:nowrap;transform:scaleX(1.0145);transform-origin:0 0;">S</div>
<div style="left:881.53px;top:337.80px;font-size:12px;line-height:14px;color:#0f62a0;font-weight:normal;white-space:nowrap;transform:scaleX(0.9855);transform-origin:0 0;">0.132</div>
<div style="left:946.59px;top:337.80px;font-size:12px;line-height:14px;color:#0f62a0;font-weight:normal;white-space:nowrap;transform:scaleX(1.0154);transform-origin:0 0;">12 / 9</div>
<div style="left:1296.63px;top:337.80px;font-size:12px;line-height:14px;color:#222;font-weight:normal;white-space:nowrap;transform:scaleX(1.0297);transform-origin:0 0;">sqin</div>
<div style="left:1368.58px;top:338.20px;font-size:12px;line-height:14px;color:#222;font-weight:normal;white-space:nowrap;transform:scaleX(0.8690);transform-origin:0 0;">0.00</div>
<div style="left:1422px;top:335px;width:5px;height:5px;background:#0d5f94;"></div>
<div style="left:1422px;top:342px;width:5px;height:5px;background:#0d5f94;"></div>
<div style="left:1422px;top:349px;width:5px;height:5px;background:#0d5f94;"></div>
<div style="left:1438.58px;top:338.20px;font-size:12px;line-height:14px;color:#222;font-weight:normal;white-space:nowrap;transform:scaleX(0.8690);transform-origin:0 0;">0.00</div>
<div style="left:1556.44px;top:331.00px;font-size:12px;line-height:14px;color:#2196f3;font-weight:normal;white-space:nowrap;transform:scaleX(1.1054);transform-origin:0 0;">Not</div>
<div style="left:1556.59px;top:345.25px;font-size:12px;line-height:14px;color:#2196f3;font-weight:normal;white-space:nowrap;transform:scaleX(0.9524);transform-origin:0 0;">Received</div>
<div style="left:434px;top:367px;width:18px;height:18px;background:transparent;border:2px solid #0f5f9c;border-radius:3px;box-sizing:border-box;"></div>
<div style="left:473px;top:365px;width:64px;height:20px;overflow:hidden">
<div style="left:-0.71px;top:3.75px;font-size:12px;line-height:14px;color:#222;font-weight:normal;white-space:nowrap;">Bedikah</div>
</div>
<div style="left:545.56px;top:367.50px;font-size:12px;line-height:14px;color:#111;font-weight:normal;white-space:nowrap;transform:scaleX(0.9812);transform-origin:0 0;">Bedikah Tefilin</div>
<div style="left:682.10px;top:368.80px;font-size:12px;line-height:14px;color:#222;font-weight:normal;white-space:nowrap;">1</div>
<div style="left:775.10px;top:369.50px;font-size:12px;line-height:14px;color:#222;font-weight:normal;white-space:nowrap;">1</div>
<div style="left:843px;top:365px;width:24px;height:20px;background:#0d5f94;border-radius:2px;"></div>
<div style="left:850.95px;top:369.00px;font-size:12px;line-height:14px;color:#fff;font-weight:normal;white-space:nowrap;transform:scaleX(1.0145);transform-origin:0 0;">S</div>
<div style="left:1368.54px;top:369.20px;font-size:12px;line-height:14px;color:#222;font-weight:normal;white-space:nowrap;transform:scaleX(0.9631);transform-origin:0 0;">500.00</div>
<div style="left:1422px;top:366px;width:5px;height:5px;background:#0d5f94;"></div>
<div style="left:1422px;top:373px;width:5px;height:5px;background:#0d5f94;"></div>
<div style="left:1422px;top:380px;width:5px;height:5px;background:#0d5f94;"></div>
<div style="left:1438.54px;top:369.20px;font-size:12px;line-height:14px;color:#222;font-weight:normal;white-space:nowrap;transform:scaleX(0.9631);transform-origin:0 0;">500.00</div>
<div style="left:1556.44px;top:362.00px;font-size:12px;line-height:14px;color:#2196f3;font-weight:normal;white-space:nowrap;transform:scaleX(1.1054);transform-origin:0 0;">Not</div>
<div style="left:1556.59px;top:376.25px;font-size:12px;line-height:14px;color:#2196f3;font-weight:normal;white-space:nowrap;transform:scaleX(0.9524);transform-origin:0 0;">Received</div>
<div style="left:434px;top:397px;width:18px;height:18px;background:transparent;border:2px solid #0f5f9c;border-radius:3px;box-sizing:border-box;"></div>
<div style="left:473px;top:395px;width:64px;height:20px;overflow:hidden">
<div style="left:-0.69px;top:3.75px;font-size:12px;line-height:14px;color:#222;font-weight:normal;white-space:nowrap;transform:scaleX(0.9814);transform-origin:0 0;">Blank</div>
</div>
<div style="left:682.10px;top:398.80px;font-size:12px;line-height:14px;color:#222;font-weight:normal;white-space:nowrap;">1</div>
<div style="left:775.10px;top:399.50px;font-size:12px;line-height:14px;color:#222;font-weight:normal;white-space:nowrap;">1</div>
<div style="left:843px;top:395px;width:24px;height:20px;background:#0d5f94;border-radius:2px;"></div>
<div style="left:850.95px;top:399.00px;font-size:12px;line-height:14px;color:#fff;font-weight:normal;white-space:nowrap;transform:scaleX(1.0145);transform-origin:0 0;">S</div>
<div style="left:881.43px;top:398.80px;font-size:12px;line-height:14px;color:#0f62a0;font-weight:normal;white-space:nowrap;transform:scaleX(0.9504);transform-origin:0 0;">251.575</div>
<div style="left:946.60px;top:398.80px;font-size:12px;line-height:14px;color:#0f62a0;font-weight:normal;white-space:nowrap;">14 / 11</div>
<div style="left:1368.58px;top:399.20px;font-size:12px;line-height:14px;color:#222;font-weight:normal;white-space:nowrap;transform:scaleX(0.8690);transform-origin:0 0;">0.00</div>
<div style="left:1422px;top:396px;width:5px;height:5px;background:#0d5f94;"></div>
<div style="left:1422px;top:403px;width:5px;height:5px;background:#0d5f94;"></div>
<div style="left:1422px;top:410px;width:5px;height:5px;background:#0d5f94;"></div>
<div style="left:1438.58px;top:399.20px;font-size:12px;line-height:14px;color:#222;font-weight:normal;white-space:nowrap;transform:scaleX(0.8690);transform-origin:0 0;">0.00</div>
<div style="left:1556.44px;top:392.00px;font-size:12px;line-height:14px;color:#2196f3;font-weight:normal;white-space:nowrap;transform:scaleX(1.1054);transform-origin:0 0;">Not</div>
<div style="left:1556.59px;top:406.25px;font-size:12px;line-height:14px;color:#2196f3;font-weight:normal;white-space:nowrap;transform:scaleX(0.9524);transform-origin:0 0;">Received</div>
<div style="left:434px;top:428px;width:18px;height:18px;background:transparent;border:2px solid #0f5f9c;border-radius:3px;box-sizing:border-box;"></div>
<div style="left:473px;top:426px;width:64px;height:20px;overflow:hidden">
<div style="left:-0.32px;top:3.75px;font-size:12px;line-height:14px;color:#222;white-space:nowrap;transform:scaleX(0.9468);transform-origin:0 0">Calacatta Grey</div>
</div>
<div style="left:545.93px;top:428.50px;font-size:12px;line-height:14px;color:#111;font-weight:normal;white-space:nowrap;transform:scaleX(0.9433);transform-origin:0 0;">Calacatta Grey Matt...</div>
<div style="left:682.40px;top:429.80px;font-size:12px;line-height:14px;color:#222;font-weight:normal;white-space:nowrap;">2</div>
<div style="left:775.40px;top:430.50px;font-size:12px;line-height:14px;color:#222;font-weight:normal;white-space:nowrap;">2</div>
<div style="left:843px;top:426px;width:24px;height:20px;background:#0d5f94;border-radius:2px;"></div>
<div style="left:850.95px;top:430.00px;font-size:12px;line-height:14px;color:#fff;font-weight:normal;white-space:nowrap;transform:scaleX(1.0145);transform-origin:0 0;">S</div>
<div style="left:881.13px;top:429.80px;font-size:12px;line-height:14px;color:#0f62a0;font-weight:normal;white-space:nowrap;transform:scaleX(0.9631);transform-origin:0 0;">15</div>
<div style="left:946.89px;top:429.80px;font-size:12px;line-height:14px;color:#0f62a0;font-weight:normal;white-space:nowrap;transform:scaleX(1.0243);transform-origin:0 0;">22 / 7</div>
<div style="left:1368.58px;top:430.20px;font-size:12px;line-height:14px;color:#222;font-weight:normal;white-space:nowrap;transform:scaleX(0.8690);transform-origin:0 0;">0.00</div>
<div style="left:1422px;top:427px;width:5px;height:5px;background:#0d5f94;"></div>
<div style="left:1422px;top:434px;width:5px;height:5px;background:#0d5f94;"></div>
<div style="left:1422px;top:441px;width:5px;height:5px;background:#0d5f94;"></div>
<div style="left:1438.58px;top:430.20px;font-size:12px;line-height:14px;color:#222;font-weight:normal;white-space:nowrap;transform:scaleX(0.8690);transform-origin:0 0;">0.00</div>
<div style="left:1556.44px;top:423.00px;font-size:12px;line-height:14px;color:#2196f3;font-weight:normal;white-space:nowrap;transform:scaleX(1.1054);transform-origin:0 0;">Not</div>
<div style="left:1556.59px;top:437.25px;font-size:12px;line-height:14px;color:#2196f3;font-weight:normal;white-space:nowrap;transform:scaleX(0.9524);transform-origin:0 0;">Received</div>
<div style="left:434px;top:458px;width:18px;height:18px;background:transparent;border:2px solid #0f5f9c;border-radius:3px;box-sizing:border-box;"></div>
<div style="left:1367.39px;top:460.25px;font-size:12px;line-height:14px;color:#222;font-weight:normal;white-space:nowrap;transform:scaleX(0.9034);transform-origin:0 0;">$500.00</div>
<div style="left:1437.39px;top:460.25px;font-size:12px;line-height:14px;color:#222;font-weight:normal;white-space:nowrap;transform:scaleX(0.9034);transform-origin:0 0;">$500.00</div>
<div style="left:434px;top:488.5px;width:18px;height:18px;background:transparent;border:2px solid #0f5f9c;border-radius:3px;box-sizing:border-box;"></div>
<svg style="position:absolute;left:523px;top:493.0px;" width="10" height="7" viewBox="0 0 10 7" preserveAspectRatio="none"><path d="M0 0H10L5 7Z" fill="#c6c6c6"/></svg>
<div style="left:434px;top:517.5px;width:18px;height:18px;background:transparent;border:2px solid #0f5f9c;border-radius:3px;box-sizing:border-box;"></div>
<svg style="position:absolute;left:523px;top:522.0px;" width="10" height="7" viewBox="0 0 10 7" preserveAspectRatio="none"><path d="M0 0H10L5 7Z" fill="#c6c6c6"/></svg>
<div style="left:434px;top:546.5px;width:18px;height:18px;background:transparent;border:2px solid #0f5f9c;border-radius:3px;box-sizing:border-box;"></div>
<svg style="position:absolute;left:523px;top:551.0px;" width="10" height="7" viewBox="0 0 10 7" preserveAspectRatio="none"><path d="M0 0H10L5 7Z" fill="#c6c6c6"/></svg>
<div style="left:434px;top:575.5px;width:18px;height:18px;background:transparent;border:2px solid #0f5f9c;border-radius:3px;box-sizing:border-box;"></div>
<svg style="position:absolute;left:523px;top:580.0px;" width="10" height="7" viewBox="0 0 10 7" preserveAspectRatio="none"><path d="M0 0H10L5 7Z" fill="#c6c6c6"/></svg>
<div style="left:434px;top:604.5px;width:18px;height:18px;background:transparent;border:2px solid #0f5f9c;border-radius:3px;box-sizing:border-box;"></div>
<svg style="position:absolute;left:523px;top:609.0px;" width="10" height="7" viewBox="0 0 10 7" preserveAspectRatio="none"><path d="M0 0H10L5 7Z" fill="#c6c6c6"/></svg>
<div style="left:434px;top:633.5px;width:18px;height:18px;background:transparent;border:2px solid #0f5f9c;border-radius:3px;box-sizing:border-box;"></div>
<svg style="position:absolute;left:523px;top:638.0px;" width="10" height="7" viewBox="0 0 10 7" preserveAspectRatio="none"><path d="M0 0H10L5 7Z" fill="#c6c6c6"/></svg>
<div style="left:434px;top:662.5px;width:18px;height:18px;background:transparent;border:2px solid #0f5f9c;border-radius:3px;box-sizing:border-box;"></div>
<svg style="position:absolute;left:523px;top:667.0px;" width="10" height="7" viewBox="0 0 10 7" preserveAspectRatio="none"><path d="M0 0H10L5 7Z" fill="#c6c6c6"/></svg>
<div style="left:434px;top:691.5px;width:18px;height:18px;background:transparent;border:2px solid #0f5f9c;border-radius:3px;box-sizing:border-box;"></div>
<svg style="position:absolute;left:523px;top:696.0px;" width="10" height="7" viewBox="0 0 10 7" preserveAspectRatio="none"><path d="M0 0H10L5 7Z" fill="#c6c6c6"/></svg>
<div style="left:434px;top:720.5px;width:18px;height:18px;background:transparent;border:2px solid #0f5f9c;border-radius:3px;box-sizing:border-box;"></div>
<svg style="position:absolute;left:523px;top:725.0px;" width="10" height="7" viewBox="0 0 10 7" preserveAspectRatio="none"><path d="M0 0H10L5 7Z" fill="#c6c6c6"/></svg>
<div style="left:434px;top:749.5px;width:18px;height:18px;background:transparent;border:2px solid #0f5f9c;border-radius:3px;box-sizing:border-box;"></div>
<svg style="position:absolute;left:523px;top:754.0px;" width="10" height="7" viewBox="0 0 10 7" preserveAspectRatio="none"><path d="M0 0H10L5 7Z" fill="#c6c6c6"/></svg>
<div style="left:434px;top:778.5px;width:18px;height:18px;background:transparent;border:2px solid #0f5f9c;border-radius:3px;box-sizing:border-box;"></div>
<svg style="position:absolute;left:523px;top:783.0px;" width="10" height="7" viewBox="0 0 10 7" preserveAspectRatio="none"><path d="M0 0H10L5 7Z" fill="#c6c6c6"/></svg>
<div style="left:434px;top:807.5px;width:18px;height:18px;background:transparent;border:2px solid #0f5f9c;border-radius:3px;box-sizing:border-box;"></div>
<svg style="position:absolute;left:523px;top:812.0px;" width="10" height="7" viewBox="0 0 10 7" preserveAspectRatio="none"><path d="M0 0H10L5 7Z" fill="#c6c6c6"/></svg>
<div style="left:434px;top:836.5px;width:18px;height:18px;background:transparent;border:2px solid #0f5f9c;border-radius:3px;box-sizing:border-box;"></div>
<svg style="position:absolute;left:523px;top:841.0px;" width="10" height="7" viewBox="0 0 10 7" preserveAspectRatio="none"><path d="M0 0H10L5 7Z" fill="#c6c6c6"/></svg>
<div style="left:434px;top:865.5px;width:18px;height:18px;background:transparent;border:2px solid #0f5f9c;border-radius:3px;box-sizing:border-box;"></div>
<svg style="position:absolute;left:523px;top:870.0px;" width="10" height="7" viewBox="0 0 10 7" preserveAspectRatio="none"><path d="M0 0H10L5 7Z" fill="#c6c6c6"/></svg>
<div style="left:434px;top:894.5px;width:18px;height:18px;background:transparent;border:2px solid #0f5f9c;border-radius:3px;box-sizing:border-box;"></div>
<svg style="position:absolute;left:523px;top:899.0px;" width="10" height="7" viewBox="0 0 10 7" preserveAspectRatio="none"><path d="M0 0H10L5 7Z" fill="#c6c6c6"/></svg>
<div style="left:1641px;top:301px;width:6px;height:472px;background:#f3f3f3;"></div>
<svg style="position:absolute;left:1640px;top:291px;" width="8" height="5" viewBox="0 0 8 6" preserveAspectRatio="none"><path d="M1 5L4 1L7 5" fill="none" stroke="#e0e0e0" stroke-width="1.2"/></svg>
<div style="left:442px;top:923px;width:1169px;height:7px;background:#f2f2f2;"></div>
<svg style="position:absolute;left:1626px;top:923px;" width="5" height="8" viewBox="0 0 5 8" preserveAspectRatio="none"><path d="M1 1L4 4L1 7" fill="none" stroke="#e2e2e2" stroke-width="1.2"/></svg>
<svg style="position:absolute;left:434px;top:923px;" width="5" height="8" viewBox="0 0 5 8" preserveAspectRatio="none"><path d="M4 1L1 4L4 7" fill="none" stroke="#e8e8e8" stroke-width="1.2"/></svg>
<svg style="position:absolute;left:1640px;top:909px;" width="8" height="5" viewBox="0 0 8 5" preserveAspectRatio="none"><path d="M1 1L4 4L7 1" fill="none" stroke="#e2e2e2" stroke-width="1.2"/></svg>
<div style="left:429px;top:955px;width:22px;height:9px;background:#e4e4e4;border-radius:5px;"></div>
<div style="left:427px;top:953px;width:12px;height:12px;background:#c0c0c0;border-radius:6px;"></div>
<div style="left:461.44px;top:951.50px;font-size:12px;line-height:14px;color:#222;font-weight:normal;white-space:nowrap;transform:scaleX(0.9920);transform-origin:0 0;">Vendor Consignment</div>
<div style="left:591px;top:955px;width:22px;height:9px;background:#e4e4e4;border-radius:5px;"></div>
<div style="left:589px;top:953px;width:12px;height:12px;background:#c0c0c0;border-radius:6px;"></div>
<div style="left:622.44px;top:951.50px;font-size:12px;line-height:14px;color:#222;font-weight:normal;white-space:nowrap;">Require Vendor Acknowledgment</div>
<div style="left:818px;top:955px;width:22px;height:9px;background:#f0f0f0;border-radius:5px;"></div>
<div style="left:816px;top:953px;width:12px;height:12px;background:#e2e2e2;border-radius:6px;"></div>
<div style="left:849.48px;top:951.50px;font-size:12px;line-height:14px;color:#a8a8a8;font-weight:normal;white-space:nowrap;transform:scaleX(0.9645);transform-origin:0 0;">Send with Prices</div>
<div style="left:427px;top:999px;width:97px;height:25px;background:#0d5f9a;"></div>
<div style="left:441.95px;top:1005.20px;font-size:12px;line-height:14px;color:#fff;font-weight:normal;white-space:nowrap;transform:scaleX(0.8851);transform-origin:0 0;">VOID ORDER</div>
<div style="left:534px;top:999px;width:85px;height:25px;background:#0d5f9a;"></div>
<div style="left:548.54px;top:1005.20px;font-size:12px;line-height:14px;color:#fff;font-weight:normal;white-space:nowrap;transform:scaleX(0.8907);transform-origin:0 0;">PO TERMS</div>
<div style="left:1309px;top:999px;width:75px;height:25px;background:#ececec;"></div>
<div style="left:1323.85px;top:1005.20px;font-size:12px;line-height:14px;color:#0f62a0;font-weight:normal;white-space:nowrap;transform:scaleX(0.9245);transform-origin:0 0;">CANCEL</div>
<div style="left:1394px;top:999px;width:88px;height:25px;background:#0d5f9a;"></div>
<div style="left:1409.09px;top:1005.20px;font-size:12px;line-height:14px;color:#fff;font-weight:normal;white-space:nowrap;transform:scaleX(0.8460);transform-origin:0 0;">CREATE SO</div>
<div style="left:1492px;top:999px;width:137px;height:25px;background:#0d5f9a;"></div>
<div style="left:1547.84px;top:1005.20px;font-size:12px;line-height:14px;color:#fff;font-weight:normal;white-space:nowrap;transform:scaleX(0.8450);transform-origin:0 0;">SAVE</div>
<div style="left:1630px;top:999px;width:22px;height:25px;background:#0d5f9a;"></div>
<svg style="position:absolute;left:1637px;top:1010px;" width="8" height="5" viewBox="0 0 8 5" preserveAspectRatio="none"><path d="M0 0H8L4 5Z" fill="#fff"/></svg>
<div style="left:1660px;top:158px;width:1px;height:882px;background:#e2e2e2;"></div>
<div style="left:1661px;top:158px;width:259px;height:882px;background:#ffffff;"></div>
<div style="left:1663.52px;top:169.50px;font-size:12px;line-height:14px;color:#333;font-weight:normal;white-space:nowrap;transform:scaleX(0.9436);transform-origin:0 0;">TRANSACTION</div>
<div style="left:1661px;top:194px;width:85px;height:2px;background:#0b5f98;"></div>
<div style="left:1676.46px;top:214.70px;font-size:12.5px;line-height:14px;color:#333;font-weight:normal;white-space:nowrap;transform:scaleX(0.9552);transform-origin:0 0;-webkit-text-stroke:0.25px #333;">SUMMARY</div>
<div style="left:1676.38px;top:242.25px;font-size:12px;line-height:14px;color:#333;font-weight:normal;white-space:nowrap;transform:scaleX(1.0373);transform-origin:0 0;">Created on 06/17/2021 02:36 PM by test</div>
<div style="left:1676.07px;top:262.75px;font-size:12px;line-height:14px;color:#333;font-weight:normal;white-space:nowrap;transform:scaleX(0.9670);transform-origin:0 0;">Last edited on 06/17/2021 02:36 PM by test</div>
<div style="left:1661px;top:293px;width:259px;height:2px;background:#ececec;"></div>
<svg style="position:absolute;left:1679px;top:306px;" width="17" height="17" viewBox="0 0 17 17" preserveAspectRatio="none"><circle cx="8.5" cy="8.5" r="8.5" fill="#2a6ee8"/><path d="M4.5 8.8L7.3 11.5L12.5 5.8" fill="none" stroke="#fff" stroke-width="1.8"/></svg>
<div style="left:1702.45px;top:308.10px;font-size:12px;line-height:14px;color:#222;font-weight:normal;white-space:nowrap;transform:scaleX(0.9372);transform-origin:0 0;">0 Open Tasks</div>
<svg style="position:absolute;left:1679px;top:329.5px;" width="17" height="17" viewBox="0 0 17 17" preserveAspectRatio="none"><circle cx="8.5" cy="8.5" r="8.5" fill="#a3d4a3"/><path d="M4.5 8.8L7.3 11.5L12.5 5.8" fill="none" stroke="#fff" stroke-width="1.8"/></svg>
<div style="left:1702.43px;top:331.00px;font-size:12px;line-height:14px;color:#9a9a9a;font-weight:normal;white-space:nowrap;transform:scaleX(0.9691);transform-origin:0 0;">0 Completed Tasks</div>
<div style="left:1661px;top:358px;width:259px;height:2px;background:#ececec;"></div>
<div style="left:1661px;top:401px;width:259px;height:2px;background:#ececec;"></div>
<div style="left:1673.84px;top:418.80px;font-size:12.5px;line-height:14px;color:#222;font-weight:normal;white-space:nowrap;transform:scaleX(0.9627);transform-origin:0 0;">RELATED DOCUMENTS</div>
<div style="left:1673.93px;top:441.50px;font-size:12.5px;line-height:14px;color:#5c5c5c;font-weight:normal;white-space:nowrap;transform:scaleX(1.0701);transform-origin:0 0;-webkit-text-stroke:0.25px #5c5c5c;">ktest-vendor</div>
<div style="left:1677.55px;top:463.60px;font-size:11px;line-height:12px;color:#777;font-weight:normal;white-space:nowrap;transform:scaleX(1.0163);transform-origin:0 0;">06/17/2021</div>
<div style="left:1740.33px;top:462.60px;font-size:12.5px;line-height:14px;color:#0f62a0;font-weight:normal;white-space:nowrap;transform:scaleX(0.9509);transform-origin:0 0;">IRC-0013873-D</div>
<div style="left:1888.59px;top:462.60px;font-size:12px;line-height:14px;color:#222;font-weight:normal;white-space:nowrap;transform:scaleX(0.8758);transform-origin:0 0;">$0.00</div>
<div style="left:1661px;top:917px;width:259px;height:1px;background:#e8e8e8;"></div>
<div style="left:1676.66px;top:931.00px;font-size:12px;line-height:14px;color:#222;font-weight:normal;white-space:nowrap;transform:scaleX(1.0075);transform-origin:0 0;-webkit-text-stroke:0.3px #222;">Open Balance</div>
<div style="left:1676.94px;top:953.50px;font-size:12px;line-height:14px;color:#222;font-weight:normal;white-space:nowrap;transform:scaleX(1.0916);transform-origin:0 0;-webkit-text-stroke:0.45px #222;">Total:</div>
<div style="left:1859.38px;top:953.50px;font-size:12px;line-height:14px;color:#222;font-weight:normal;white-space:nowrap;transform:scaleX(1.0317);transform-origin:0 0;-webkit-text-stroke:0.45px #222;">$500.00</div>
<div style="left:1676.60px;top:968.50px;font-size:12px;line-height:14px;color:#0f62a0;font-weight:normal;white-space:nowrap;transform:scaleX(0.9944);transform-origin:0 0;">Currency:</div>
<div style="left:1677px;top:987px;width:227px;height:1px;background:#e4e4e4;"></div>
<div style="left:1676.94px;top:996.60px;font-size:12px;line-height:14px;color:#222;font-weight:normal;white-space:nowrap;transform:scaleX(1.0683);transform-origin:0 0;-webkit-text-stroke:0.45px #222;">Total Applied:</div>
<div style="left:1873.18px;top:996.60px;font-size:12px;line-height:14px;color:#222;font-weight:normal;white-space:nowrap;transform:scaleX(1.0319);transform-origin:0 0;-webkit-text-stroke:0.45px #222;">$0.00</div>
<div style="left:1677.20px;top:1011.50px;font-size:12px;line-height:14px;color:#222;font-weight:normal;white-space:nowrap;transform:scaleX(1.0705);transform-origin:0 0;-webkit-text-stroke:0.45px #222;">Amount Due:</div>
<div style="left:1859.38px;top:1011.50px;font-size:12px;line-height:14px;color:#e51a1a;font-weight:normal;white-space:nowrap;transform:scaleX(1.0317);transform-origin:0 0;-webkit-text-stroke:0.45px #e51a1a;">$500.00</div>
<div style="left:1744px;top:154px;width:176px;height:99px;background:#ffffff;border:1px solid #1d62a0;border-radius:3px;box-sizing:border-box;"></div>
<svg style="position:absolute;left:1755px;top:162px;" width="14" height="19" viewBox="0 0 14 19" preserveAspectRatio="none"><path d="M2 0H9L14 5V17A2 2 0 0 1 12 19H2A2 2 0 0 1 0 17V2A2 2 0 0 1 2 0Z" fill="#0d5f9a"/><path d="M9 0V5H14" fill="#fff" opacity="0.35"/><rect x="3" y="9.5" width="8" height="2" fill="#fff"/><rect x="3" y="13.5" width="8" height="2" fill="#fff"/></svg>
<div style="left:1779.19px;top:164.25px;font-size:13px;line-height:15px;color:#0f62a0;font-weight:normal;white-space:nowrap;transform:scaleX(0.7892);transform-origin:0 0;">CREATE PDF</div>
<svg style="position:absolute;left:1753px;top:192px;" width="18" height="19" viewBox="0 0 18 19" preserveAspectRatio="none"><circle cx="4" cy="4" r="3.3" fill="#fff" stroke="#0d5f9a" stroke-width="1.2"/><path d="M4.6 1.6L2.9 4.3H5.1L3.4 6.6" stroke="#0d5f9a" stroke-width="1" fill="none"/><path d="M6 4H12L18 10V17A2 2 0 0 1 16 19H8A2 2 0 0 1 6 17Z" fill="#0d5f9a"/><rect x="8.5" y="12.5" width="7" height="1.8" fill="#fff"/><rect x="8.5" y="15.5" width="7" height="1.8" fill="#fff"/></svg>
<div style="left:1779.21px;top:194.25px;font-size:13px;line-height:15px;color:#0f62a0;font-weight:normal;white-space:nowrap;transform:scaleX(0.8400);transform-origin:0 0;">QUICK SAVE &amp; OPEN PDF</div>
<svg style="position:absolute;left:1753px;top:223px;" width="18" height="18" viewBox="0 0 18 18" preserveAspectRatio="none"><path d="M6 1H12L17 6V15.8A1.2 1.2 0 0 1 15.8 17H7.2A1.2 1.2 0 0 1 6 15.8V13M6 8V1" fill="none" stroke="#0d5f9a" stroke-width="1.5"/><rect x="8" y="7.5" width="3" height="2" fill="#0d5f9a"/><rect x="12" y="7.5" width="3" height="2" fill="#0d5f9a"/><rect x="8" y="10.5" width="3" height="2" fill="#0d5f9a"/><rect x="12" y="10.5" width="3" height="2" fill="#0d5f9a"/><rect x="8" y="13.5" width="3" height="1.8" fill="#0d5f9a"/><rect x="12" y="13.5" width="3" height="1.8" fill="#0d5f9a"/><path d="M0.5 9L5 15M5 9L0.5 15" stroke="#0d5f9a" stroke-width="1.5"/></svg>
<div style="left:1779.19px;top:224.25px;font-size:13px;line-height:15px;color:#0f62a0;font-weight:normal;white-space:nowrap;transform:scaleX(0.7871);transform-origin:0 0;">CREATE 3PL EXCEL</div>
<div style="left:1736px;top:213px;width:184px;height:40px;background:transparent;border:4px solid #ee5546;box-sizing:border-box;box-shadow:inset 2px 2px 2px rgba(0,0,0,0.55),0 2px 3px rgba(0,0,0,0.3);"></div>
</body></html>
